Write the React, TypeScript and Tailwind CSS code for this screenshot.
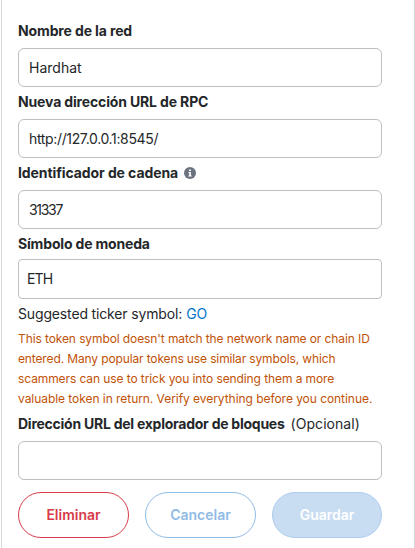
import type { ReactNode } from "react";

function Label({ children, className = "h-8 pb-0.5" }: { children: ReactNode; className?: string }) {
  return (
    <div className={`flex items-center whitespace-nowrap font-bold ${className}`}>
      {children}
    </div>
  );
}

function Field({
  value,
  label,
  className = "h-[39px] rounded-md pl-2.5",
  textClass = "",
}: {
  value: string;
  label: string;
  className?: string;
  textClass?: string;
}) {
  return (
    <div
      role="textbox"
      aria-label={label}
      className={`flex items-center border border-[#bbc0c5] bg-white ${className}`}
    >
      <span className={textClass}>{value}</span>
    </div>
  );
}

function InfoIcon() {
  return (
    <svg className="ml-1.5 size-3" viewBox="0 0 12 12">
      <circle cx="6" cy="6" r="6" fill="#6a737d" />
      <rect x="5" y="2.4" width="2" height="1.7" rx=".4" fill="#fff" />
      <path d="M4.5 5h2.4v3.5h.8v1H4.3v-1h.9V6h-.7z" fill="#fff" />
    </svg>
  );
}

export default function App() {
  return (
    <div className="h-[548px] w-[415px] overflow-hidden bg-white pl-px font-['Inter',sans-serif] text-sm text-[#24272a]">
      <div className="h-full border-x border-[#d6d9dc] pl-4 pr-8 pt-4">
        <Label>
          <span className="tracking-[-0.13px]">Nombre de la red</span>
        </Label>
        <Field label="Nombre de la red" value="Hardhat" />
        <Label>
          <span className="tracking-[-0.15px]">Nueva dirección URL de RPC</span>
        </Label>
        <Field label="URL de RPC" value="http://127.0.0.1:8545/" textClass="tracking-[-0.35px]" />
        <Label>
          <span className="tracking-[-0.09px]">Identificador de cadena</span>
          <InfoIcon />
        </Label>
        <Field label="Identificador de cadena" value="31337" textClass="tracking-[-1.3px]" />
        <Label className="h-[30px]">
          <span className="tracking-[-0.17px]">Símbolo de moneda</span>
        </Label>
        <Field
          label="Símbolo de moneda"
          value="ETH"
          className="h-10 rounded-sm pl-2"
          textClass="tracking-[-0.8px]"
        />
        <div className="flex h-[30px] items-center gap-1 whitespace-nowrap">
          <span className="tracking-[-0.15px]">Suggested ticker symbol:</span>
          <a className="text-[#0376c9]">GO</a>
        </div>
        <p className="whitespace-nowrap text-xs leading-5 text-[#bf5208]">
          <span className="block tracking-[-0.1px]">This token symbol doesn't match the network name or chain ID</span>
          <span className="block tracking-[-0.13px]">entered. Many popular tokens use similar symbols, which</span>
          <span className="block tracking-[-0.09px]">scammers can use to trick you into sending them a more</span>
          <span className="block tracking-[-0.05px]">valuable token in return. Verify everything before you continue.</span>
        </p>
        <Label>
          <span className="tracking-[-0.25px]">Dirección URL del explorador de bloques</span>
          <span className="ml-1.5 font-normal tracking-[0.05px]">(Opcional)</span>
        </Label>
        <Field label="Explorador de bloques" value="" />
        <div className="mt-3 flex h-[46px] gap-4 font-semibold">
          <button className="w-[111px] rounded-full border border-[#d73a49] text-[#d73a49]">Eliminar</button>
          <button className="w-[111px] rounded-full border border-[#8fbbe6] text-[#8fbbe6]">Cancelar</button>
          <button className="w-[110px] rounded-full border border-[#aecdee] bg-[#c8dcf2] text-white">Guardar</button>
        </div>
      </div>
    </div>
  );
}
